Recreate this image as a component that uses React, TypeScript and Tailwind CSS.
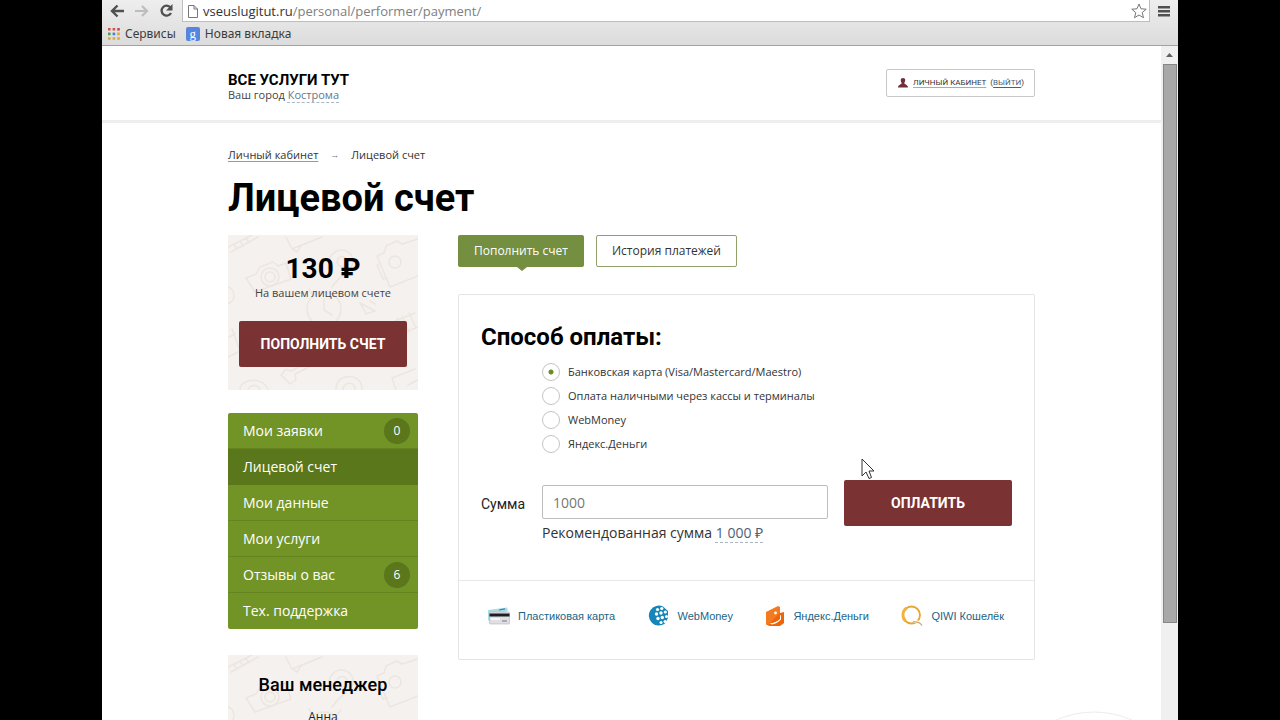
import { useState, type ReactNode } from "react";

const display = "font-['Roboto',sans-serif]";

function Doodles() {
  return (
    <svg
      className="absolute inset-0 h-full w-full"
      viewBox="0 0 190 155"
      preserveAspectRatio="xMidYMin slice"
      fill="none"
      stroke="#ebe6e0"
      strokeWidth="1.5"
      strokeLinejoin="round"
      strokeLinecap="round"
      aria-hidden="true"
    >
      <path d="M0 12 24 0M3 17 30 2M6 9l3 5M12 6l3 5M18 3l3 5" />
      <path d="M58 2l6 12 30-12M64 14l5 3 4-6" />
      <path d="M18 43l10-4 4-7 13-5 5 4 8-3 5 16-36 13z" />
      <circle cx="42" cy="42" r="9" />
      <circle cx="42" cy="42" r="5" />
      <path d="M100 34c0-10 4-18 12-19s14 6 13 13c-2 8-12 11-21 24M112 22a5 5 0 1 1 0 9 5 5 0 0 1 0-9z" />
      <path d="M149 21l7-3 2-7 11-5 5 3 16-5M149 21l13 31 28-11M152 28l-3 2 6 14 4-1" />
      <circle cx="167" cy="27" r="6" />
      <path d="M0 52c7 2 8 12 2 16H0M4 94l8 22-12 6M1 102l6-3" />
      <circle cx="96" cy="74" r="17" />
      <path d="M96 64v11l8 5M84 59l-3-5M109 60l4-5" />
      <path d="M132 68l15 8-9 3-3-6zM142 66l5 3" />
      <path d="M167 86l20-8M172 99l18-7M169 83l7 17M174 81l7 16M181 78l7 15" />
      <path d="M53 140l5-6 5 2 14-7-1-5 7-2 3 7-5 3-14 7 1 6-6 4z" />
      <path d="M12 155c0-12 24-14 28 0M20 155c2-6 10-6 12 0M108 155c-1-18 27-18 26 0M115 155c0-9 13-9 12 0M164 143l23-9M168 155l-4-12M180 150l10-5" />
    </svg>
  );
}

function PatternCard({ children, className }: { children: ReactNode; className: string }) {
  return (
    <section className={`relative overflow-hidden bg-[#f5f1ee] text-center ${className}`}>
      <Doodles />
      <div className="relative">{children}</div>
    </section>
  );
}

function BrowserChrome() {
  return (
    <header className="shrink-0 border-b border-[#a3a3a3] bg-linear-to-b from-[#eeeeee] to-[#dcdcdc] font-['Noto_Sans',sans-serif]">
      <div className="flex h-[22px] items-center">
        <div className="flex w-20 shrink-0 items-center gap-2.5 pl-2">
          <button type="button" aria-label="Назад">
            <svg width="15" height="14" viewBox="0 0 15 14" fill="none" stroke="#505050" strokeWidth="2.4">
              <path d="M14 7H3M7.500 1.500 2 7l5.500 5.500" />
            </svg>
          </button>
          <button type="button" aria-label="Вперёд">
            <svg width="14" height="14" viewBox="0 0 14 14" fill="none" stroke="#bdbdbd" strokeWidth="2.2">
              <path d="M0 7h11M7 2l5 5-5 5" />
            </svg>
          </button>
          <button type="button" aria-label="Обновить">
            <svg width="15" height="14" viewBox="0 0 15 14" fill="none" stroke="#505050" strokeWidth="2.3">
              <path d="M11.500 3.500A5 5 0 1 0 12 9" />
              <path d="M13.500 0v6.500H7z" fill="#505050" stroke="none" />
            </svg>
          </button>
        </div>
        <div className="flex h-[22px] min-w-0 grow items-center border border-t-0 border-[#bdbdbd] bg-white pl-1">
          <svg className="shrink-0" width="12" height="14" viewBox="0 0 12 14" fill="#fff" stroke="#777">
            <path d="M1.500 1.500h5.500l3.500 3.500v8.500h-9zM7 1.500V5h3.500" />
          </svg>
          <div className="min-w-0 grow truncate pl-1 font-['Open_Sans',sans-serif] text-[13px] leading-5 text-[#808080]">
            <span className="text-[#333]">vseuslugitut.ru</span>/personal/performer/payment/
          </div>
          <button type="button" aria-label="Добавить в закладки" className="pr-0.5">
            <svg width="16" height="16" viewBox="0 0 16 16" fill="#fff" stroke="#777" strokeLinejoin="round">
              <path d="m8 1 2 4.800 5.200.4-4 3.400 1.300 5.100L8 12l-4.500 2.700 1.300-5.100-4-3.400L6 5.800z" />
            </svg>
          </button>
        </div>
        <button type="button" aria-label="Меню" className="flex w-7 shrink-0 justify-center">
          <svg width="12" height="12" viewBox="0 0 12 12" fill="#505050">
            <path d="M0 1h12v2.500H0zM0 5h12v2.500H0zM0 9h12v2.500H0z" />
          </svg>
        </button>
      </div>
      <nav className="flex h-[23px] items-center gap-2.5 pl-1.5 text-xs text-[#3c3c3c]">
        <a href="#apps" className="flex items-center gap-[5px]">
          <svg width="12" height="12" viewBox="0 0 12 12">
            <path d="M0 0h2.600v2.600H0zM4.600 0h2.600v2.600H4.600z" fill="#d35442" />
            <path d="M9.200 0h2.600v2.600H9.200z" fill="#c74a4a" />
            <path d="M0 4.600h2.600v2.600H0z" fill="#4b9a5a" />
            <path d="M4.600 4.600h2.600v2.600H4.600z" fill="#4a7fd0" />
            <path d="M9.200 4.600h2.600v2.600H9.200zM0 9.200h2.600v2.600H0zM4.600 9.200h2.600v2.600H4.600zM9.200 9.200h2.600v2.600H9.200z" fill="#dba63a" />
          </svg>
          Сервисы
        </a>
        <a href="#new-tab" className="flex items-center gap-[5px]">
          <span className="flex size-[14px] items-center justify-center rounded-xs bg-[#5585df] font-['Liberation_Serif',serif] text-[13px] leading-none text-white">
            g
          </span>
          Новая вкладка
        </a>
      </nav>
    </header>
  );
}

function Scrollbar() {
  return (
    <div className="flex w-[17px] shrink-0 flex-col items-center bg-[#f0f0f0]" aria-hidden="true">
      <div className="flex h-[18px] items-center">
        <svg width="7" height="4" viewBox="0 0 7 4" fill="#606060">
          <path d="M3.500 0 7 4H0z" />
        </svg>
      </div>
      <div className="h-[83%] w-[14px] border border-[#868686] bg-[#a8a8a8]" />
    </div>
  );
}

const menu: { label: string; count?: number; active?: boolean }[] = [
  { label: "Мои заявки", count: 0 },
  { label: "Лицевой счет", active: true },
  { label: "Мои данные" },
  { label: "Мои услуги" },
  { label: "Отзывы о вас", count: 6 },
  { label: "Тех. поддержка" },
];

function SideMenu() {
  return (
    <nav className="mt-[23px] overflow-hidden rounded-xs bg-[#729427] text-sm text-white">
      {menu.map((item) => (
        <a
          key={item.label}
          href="#menu"
          className={`flex h-9 items-center justify-between border-b pr-2 pl-[15px] last:border-b-0 ${
            item.active ? "border-[#5a771b] bg-[#5a771b]" : "border-[#648420]"
          }`}
        >
          {item.label}
          {item.count !== undefined && (
            <span className="flex size-[26px] items-center justify-center rounded-full bg-[#5a771b] text-xs">
              {item.count}
            </span>
          )}
        </a>
      ))}
    </nav>
  );
}

function CardIcon() {
  return (
    <svg width="23" height="18" viewBox="0 0 23 18">
      <path d="M1 3 20 .5l1 3L3 15 1 13z" fill="#a9dbea" />
      <path d="M12 3l6-1.200" stroke="#3d8298" strokeWidth="1.200" />
      <rect x="2.500" y="5" width="20" height="12" rx="1" fill="#dedee3" stroke="#b4b5bb" strokeWidth=".6" />
      <path d="M2.500 6.500h20v3h-20z" fill="#1d1d22" />
      <path d="M4 12h9" stroke="#fff" strokeWidth="1.500" />
      <path d="M15 14h5" stroke="#77777f" />
    </svg>
  );
}

function WebMoneyIcon() {
  return (
    <svg width="22" height="22" viewBox="0 0 22 22">
      <path d="M15 1.500A10 10 0 1 0 17 18.500L20 13V6z" fill="#1686b8" />
      <g fill="#fff">
        <circle cx="9.500" cy="4.500" r="1.600" />
        <circle cx="13.800" cy="3.500" r="1.600" />
        <circle cx="8.500" cy="9" r="1.700" />
        <circle cx="13" cy="8" r="1.700" />
        <circle cx="17.300" cy="7" r="1.600" />
        <circle cx="10" cy="13.500" r="1.700" />
        <circle cx="14.300" cy="12.500" r="1.700" />
        <circle cx="18.500" cy="11.500" r="1.500" />
        <circle cx="13" cy="17.500" r="1.500" />
        <circle cx="17" cy="16.500" r="1.500" />
      </g>
    </svg>
  );
}

function YandexIcon() {
  return (
    <svg width="20" height="22" viewBox="0 0 20 22">
      <path d="M1 7 13 1l2 1v12L3 20.500l-2-1z" fill="#f47a20" />
      <path d="M15 8l4-1v11l-5 2.500H4L3 20z" fill="#ee6408" />
      <path d="M4.500 18.500c4-.5 8-2 10.500-4.500V10l1 .5v4c-3 3-6 4.500-9 5z" fill="#fff" />
      <path d="M3 20.500 19 18l-4 3H4z" fill="#ee6408" />
      <circle cx="10.500" cy="8" r="1.400" fill="#fff" />
    </svg>
  );
}

function QiwiIcon() {
  return (
    <svg width="22" height="22" viewBox="0 0 22 22" fill="none">
      <circle cx="10.500" cy="10" r="8.500" stroke="#eaa52c" strokeWidth="1.800" />
      <path d="M4.500 16a8.500 8.500 0 0 1 1-13" stroke="#f1b33e" strokeWidth="2.800" />
      <path d="M12 16.500c4-.5 7 .5 9.500 4" stroke="#fff" strokeWidth="3" />
      <path d="M12 17c4-.5 7 .5 9 3.500" stroke="#d0a060" strokeWidth="1.300" />
    </svg>
  );
}

const methods = [
  "Банковская карта (Visa/Mastercard/Maestro)",
  "Оплата наличными через кассы и терминалы",
  "WebMoney",
  "Яндекс.Деньги",
];

const wallets = [
  { label: "Пластиковая карта", icon: <CardIcon /> },
  { label: "WebMoney", icon: <WebMoneyIcon /> },
  { label: "Яндекс.Деньги", icon: <YandexIcon /> },
  { label: "QIWI Кошелёк", icon: <QiwiIcon /> },
];

function PaymentPanel() {
  const [method, setMethod] = useState(0);
  const [sum, setSum] = useState("1000");
  return (
    <form className="mt-[27px] rounded-xs border border-[#e4e4e4]">
      <div className="px-[22px] pt-[26px] pb-[37px]">
        <h2 id="method-title" className={`text-2xl leading-8 font-bold text-black ${display}`}>
          Способ оплаты:
        </h2>
        <div role="radiogroup" aria-labelledby="method-title" className="mt-[7px] pl-[61px]">
          {methods.map((label, i) => (
            <label key={label} className="flex h-6 items-center gap-2 text-[11px] text-[#333]">
              <input
                type="radio"
                name="method"
                checked={method === i}
                onChange={() => setMethod(i)}
                className="size-[18px] shrink-0 appearance-none rounded-full border border-[#c4c4c4] bg-white checked:bg-[radial-gradient(circle,#6b8a2c_2px,#fff_3px)]"
              />
              {label}
            </label>
          ))}
        </div>
        <div className="mt-6 flex items-start gap-4">
          <label htmlFor="sum" className={`w-[45px] shrink-0 pt-3 text-sm leading-6 text-[#222] ${display}`}>
            Сумма
          </label>
          <div className="min-w-0 grow pt-[5px]">
            <input
              id="sum"
              value={sum}
              onChange={(e) => setSum(e.target.value)}
              className="h-[34px] w-full rounded-xs border border-[#bdbdbd] bg-white px-2.5 text-sm text-[#777] outline-none"
            />
            <p className="mt-1 text-sm leading-5 text-[#333]">
              Рекомендованная сумма{" "}
              <a href="#sum" className="text-[#4d6175] underline decoration-[#a9b6c0] decoration-dashed decoration-1 underline-offset-4">
                1 000 ₽
              </a>
            </p>
          </div>
          <button
            type="button"
            className={`h-[46px] w-[168px] shrink-0 rounded-xs bg-[#7a3232] text-sm font-bold text-white ${display}`}
          >
            ОПЛАТИТЬ
          </button>
        </div>
      </div>
      <div className="flex h-[79px] items-center justify-between border-t border-[#e8e8e8] pr-[30px] pb-2 pl-7 font-['Liberation_Sans',sans-serif] text-[11px] text-[#1c6484]">
        {wallets.map((w) => (
          <a key={w.label} href="#wallet" className="flex items-center gap-2">
            {w.icon}
            {w.label}
          </a>
        ))}
      </div>
    </form>
  );
}

export default function App() {
  return (
    <div className="h-screen bg-black font-['Open_Sans',sans-serif]">
      <div className="relative mx-auto flex h-full max-w-[1076px] flex-col overflow-hidden bg-white">
        <BrowserChrome />
        <div className="flex min-h-0 grow">
          <div className="min-w-0 grow overflow-hidden">
            <div className="border-b-[3px] border-[#eeeeee]">
              <div className="mx-auto flex h-[74px] max-w-[807px] items-center justify-between">
                <div className="pt-2">
                  <a href="#home" className={`block text-[15px] leading-4 font-bold text-black ${display}`}>
                    ВСЕ УСЛУГИ ТУТ
                  </a>
                  <p className="text-[11px] leading-[14px] text-[#444]">
                    Ваш город{" "}
                    <a href="#city" className="text-[#61788c] underline decoration-[#a9b6c0] decoration-dashed decoration-1 underline-offset-3">
                      Кострома
                    </a>
                  </p>
                </div>
                <div className={`flex h-7 items-center rounded-xs border border-[#c8c8c8] px-2.5 text-[8px] text-[#333] ${display}`}>
                  <svg className="mr-1" width="12" height="10" viewBox="0 0 12 10" fill="#713038">
                    <path d="M6 0c3 0 2.500 3 1.300 5 0 1.500 3.700 1.500 3.700 4.500H1C1 6.500 4.700 6.500 4.700 5 3.500 3 3 0 6 0z" />
                  </svg>
                  <a href="#cabinet" className="underline decoration-[#aaa] underline-offset-2">
                    ЛИЧНЫЙ КАБИНЕТ
                  </a>
                  <span className="pl-1">
                    (
                    <a href="#exit" className="text-[#4d6175] underline underline-offset-2">
                      ВЫЙТИ
                    </a>
                    )
                  </span>
                </div>
              </div>
            </div>

            <main className="mx-auto max-w-[807px] pt-6">
              <nav className="flex gap-3 text-[11px] leading-4 text-[#333]">
                <a href="#cabinet" className="underline decoration-[#999] underline-offset-2">
                  Личный кабинет
                </a>
                <span className="text-[9px] text-[#777]">→</span>
                <span>Лицевой счет</span>
              </nav>
              <h1 className={`mt-2.5 text-[38px] leading-[50px] font-bold text-black ${display}`}>Лицевой счет</h1>

              <div className="mt-3 flex items-start gap-10">
                <aside className="w-[190px] shrink-0">
                  <PatternCard className="h-[155px] px-[11px] pt-4">
                    <p className={`text-[28px] leading-9 font-bold text-black ${display}`}>130 ₽</p>
                    <p className="text-[11px] leading-3 text-[#444]">На вашем лицевом счете</p>
                    <button
                      type="button"
                      className={`mt-[22px] h-[46px] w-full rounded-xs bg-[#7a3232] text-sm font-bold text-white ${display}`}
                    >
                      ПОПОЛНИТЬ СЧЕТ
                    </button>
                  </PatternCard>
                  <SideMenu />
                  <PatternCard className="mt-[26px] h-[155px] pt-4">
                    <h2 className={`text-lg leading-7 font-medium text-black ${display}`}>Ваш менеджер</h2>
                    <p className="mt-2 text-xs leading-5 text-[#222]">Анна</p>
                  </PatternCard>
                </aside>

                <div className="min-w-0 grow">
                  <div className="flex gap-3 text-xs">
                    <button type="button" className="relative h-8 rounded-xs bg-[#738f3f] px-4 text-white">
                      Пополнить счет
                      <svg className="absolute top-full left-1/2 -ml-1" width="10" height="5" viewBox="0 0 10 5" fill="#738f3f">
                        <path d="M0 0h10L5 4z" />
                      </svg>
                    </button>
                    <button type="button" className="h-8 rounded-xs border border-[#8fa06a] px-[15px] text-[#333]">
                      История платежей
                    </button>
                  </div>
                  <PaymentPanel />
                </div>
              </div>
            </main>
          </div>
          <Scrollbar />
        </div>

        <svg className="absolute right-[36px] bottom-0" width="96" height="9" viewBox="0 0 96 9" fill="none" stroke="#ececec" aria-hidden="true">
          <path d="M10 9Q48-7 86 9" />
        </svg>
        <svg className="absolute top-[458px] left-[759px]" width="14" height="22" viewBox="0 0 14 22" fill="#fff" stroke="#333" aria-hidden="true">
          <path d="M1 1v17l4-4 3 6.500 2.500-1-2.500-6.500h5z" />
        </svg>
      </div>
    </div>
  );
}
